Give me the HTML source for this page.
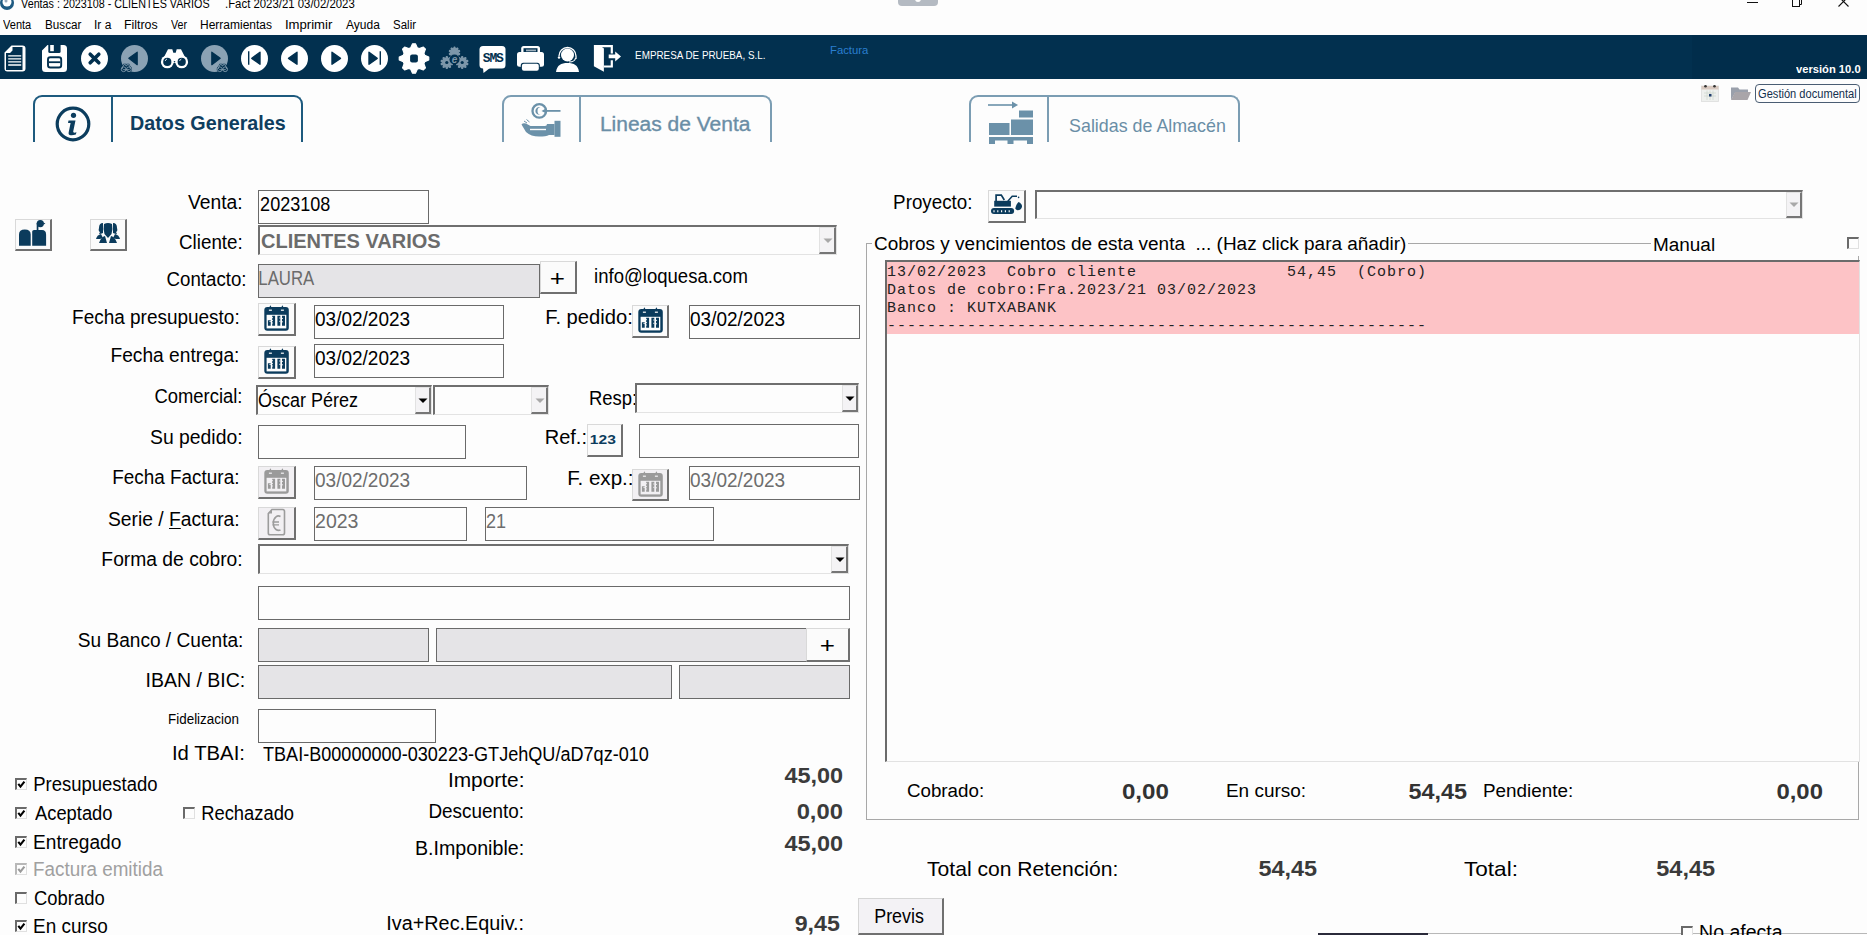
<!DOCTYPE html>
<html><head><meta charset='utf-8'><style>
html,body{margin:0;padding:0;}
body{width:1867px;height:935px;overflow:hidden;position:relative;background:#fdfdfd;font-family:'Liberation Sans',sans-serif;}
.t{position:absolute;white-space:pre;line-height:normal;}
svg{overflow:visible}
</style></head><body>
<svg style="position:absolute;left:0px;top:-4px" width="16" height="16" viewBox="0 0 16 16"><circle cx="7" cy="7" r="7" fill="#1f5b82"/><circle cx="7" cy="6" r="4.5" fill="#fff"/><circle cx="6" cy="5" r="1.5" fill="#9ab"/></svg>
<div class="t" style="transform:translateX(-0.90px) scaleX(0.8952);left:22px;top:-3px;font-family:'Liberation Sans';font-size:12px;font-weight:normal;color:#000;transform-origin:left center;">Ventas : 2023108 - CLIENTES VARIOS</div>
<div class="t" style="transform:translateX(0.00px) scaleX(0.9485);left:225px;top:-3px;font-family:'Liberation Sans';font-size:12px;font-weight:normal;color:#000;transform-origin:left center;">.Fact 2023/21 03/02/2023</div>
<div style="position:absolute;left:898px;top:-6px;width:40px;height:12px;background:#b4bac2;border-radius:0 0 4px 4px"></div>
<div style="position:absolute;left:915px;top:-4px;width:6px;height:6px;background:#fff;border-radius:50%"></div>
<div style="position:absolute;left:1747px;top:2px;width:11px;height:1px;box-sizing:border-box;background:#111"></div>
<svg style="position:absolute;left:1792px;top:-2px" width="12" height="10" viewBox="0 0 12 10"><rect x="0.5" y="1.5" width="7" height="7" fill="none" stroke="#111"/><path d="M2.5 1.5V-0.5H9.5V6.5H7.5" fill="none" stroke="#111"/></svg>
<svg style="position:absolute;left:1838px;top:-4px" width="11" height="11" viewBox="0 0 11 11"><path d="M0.5 0.5L10.5 10.5M10.5 0.5L0.5 10.5" stroke="#111" stroke-width="1.1"/></svg>
<div class="t" style="transform:translateX(0.00px) scaleX(0.9194);left:3px;top:18px;font-family:'Liberation Sans';font-size:12px;font-weight:normal;color:#000;transform-origin:left center;">Venta</div>
<div class="t" style="transform:translateX(-0.97px) scaleX(0.9722);left:46px;top:18px;font-family:'Liberation Sans';font-size:12px;font-weight:normal;color:#000;transform-origin:left center;">Buscar</div>
<div class="t" style="transform:translateX(-1.00px) scaleX(1.0000);left:95px;top:18px;font-family:'Liberation Sans';font-size:12px;font-weight:normal;color:#000;transform-origin:left center;">Ir a</div>
<div class="t" style="transform:translateX(-1.03px) scaleX(1.0323);left:125px;top:18px;font-family:'Liberation Sans';font-size:12px;font-weight:normal;color:#000;transform-origin:left center;">Filtros</div>
<div class="t" style="transform:translateX(0.00px) scaleX(0.8889);left:171px;top:18px;font-family:'Liberation Sans';font-size:12px;font-weight:normal;color:#000;transform-origin:left center;">Ver</div>
<div class="t" style="transform:translateX(-1.00px) scaleX(1.0000);left:201px;top:18px;font-family:'Liberation Sans';font-size:12px;font-weight:normal;color:#000;transform-origin:left center;">Herramientas</div>
<div class="t" style="transform:translateX(-1.10px) scaleX(1.0952);left:286px;top:18px;font-family:'Liberation Sans';font-size:12px;font-weight:normal;color:#000;transform-origin:left center;">Imprimir</div>
<div class="t" style="transform:translateX(0.00px) scaleX(1.0000);left:346px;top:18px;font-family:'Liberation Sans';font-size:12px;font-weight:normal;color:#000;transform-origin:left center;">Ayuda</div>
<div class="t" style="transform:translateX(-0.96px) scaleX(0.9565);left:394px;top:18px;font-family:'Liberation Sans';font-size:12px;font-weight:normal;color:#000;transform-origin:left center;">Salir</div>
<div style="position:absolute;left:0px;top:35px;width:1867px;height:44px;box-sizing:border-box;background:#02304f"></div>
<div style="position:absolute;left:1692px;top:35px;width:175px;height:44px;box-sizing:border-box;background:#012d4b"></div>
<svg style="position:absolute;left:4px;top:45px" width="22" height="27" viewBox="0 0 22 27"><path d="M7.5 0.5H18.5a3 3 0 0 1 3 3V23.5a3 3 0 0 1-3 3H3.5a3 3 0 0 1-3-3V7.5Z" fill="#ffffff"/><path d="M2 8H6L8.5 5.5V2H18.5V25H2Z" fill="#02304f"/><path d="M4.2 10.8H17.2M4.2 13.8H17.2M4.2 16.9H17.2M4.2 20H17.2" stroke="#ffffff" stroke-width="1.3"/></svg>
<svg style="position:absolute;left:42px;top:45px" width="25" height="27" viewBox="0 0 25 27"><path d="M5.5 0H21.5a3.5 3.5 0 0 1 3.5 3.5V23.5a3.5 3.5 0 0 1-3.5 3.5H3.5a3.5 3.5 0 0 1-3.5-3.5V5.5Z" fill="#ffffff"/><path d="M6.3 0H18.6V6.5a1.5 1.5 0 0 1-1.5 1.5H7.8a1.5 1.5 0 0 1-1.5-1.5Z" fill="#02304f"/><rect x="8.2" y="0" width="3.6" height="6.2" fill="#ffffff"/><rect x="6" y="12.3" width="13.2" height="10.2" rx="2.3" fill="none" stroke="#02304f" stroke-width="1.9"/><path d="M7 17.2H18.2" stroke="#02304f" stroke-width="1.8"/></svg>
<svg style="position:absolute;left:81px;top:45px" width="27" height="27" viewBox="0 0 27 27"><circle cx="13.5" cy="13.5" r="13.5" fill="#ffffff"/><path d="M9.2 9.2L17.8 17.8M17.8 9.2L9.2 17.8" stroke="#02304f" stroke-width="3.6" stroke-linecap="round"/></svg>
<svg style="position:absolute;left:121px;top:45px" width="27" height="28" viewBox="0 0 27 28"><circle cx="13.5" cy="13.5" r="13.5" fill="#8ba2b4"/><path d="M7.8 13.3L16.2 7.2V19.7Z" fill="#02304f" stroke="#02304f" stroke-width="1.2" stroke-linejoin="round"/><g transform="translate(0.3,19.5) scale(0.37)" fill="#02304f" stroke="#02304f" stroke-width="4"><path d="M2 10L7 0.3H11.3L12.3 3.8H14.7L15.7 0.3H20L25 10L21 14H6Z"/><circle cx="6.3" cy="12.9" r="6.4"/><circle cx="20.7" cy="12.9" r="6.4"/></g><g transform="translate(0.3,19.5) scale(0.37)" fill="none" stroke="#8ba2b4" stroke-width="2.2"><path d="M2 10L7 0.3H11.3L12.3 3.8H14.7L15.7 0.3H20L25 10L21 14H6Z"/><circle cx="6.3" cy="12.9" r="6.4"/><circle cx="20.7" cy="12.9" r="6.4"/></g></svg>
<svg style="position:absolute;left:161px;top:49px" width="27" height="20" viewBox="0 0 27 20"><g transform="translate(0,0) scale(1.0)" fill="#ffffff"><path d="M2 10L7 0.3H11.3L12.3 3.8H14.7L15.7 0.3H20L25 10L21 14H6Z"/><circle cx="6.3" cy="12.9" r="6.4"/><circle cx="20.7" cy="12.9" r="6.4"/></g><circle cx="6.3" cy="12.9" r="4.1" fill="#02304f"/><circle cx="20.7" cy="12.9" r="4.1" fill="#02304f"/><circle cx="13.5" cy="12.8" r="0.8" fill="#02304f"/><path d="M4.2 12.0Q4.5 10.5 6.0 10.0M18.6 12.0Q18.9 10.5 20.4 10.0" stroke="#ffffff" stroke-width="0.8" fill="none"/></svg>
<svg style="position:absolute;left:201px;top:45px" width="27" height="28" viewBox="0 0 27 28"><circle cx="13.5" cy="13.5" r="13.5" fill="#8ba2b4"/><path d="M19.2 13.3L10.8 7.2V19.7Z" fill="#02304f" stroke="#02304f" stroke-width="1.2" stroke-linejoin="round"/><g transform="translate(16.5,19.5) scale(0.37)" fill="#02304f" stroke="#02304f" stroke-width="4"><path d="M2 10L7 0.3H11.3L12.3 3.8H14.7L15.7 0.3H20L25 10L21 14H6Z"/><circle cx="6.3" cy="12.9" r="6.4"/><circle cx="20.7" cy="12.9" r="6.4"/></g><g transform="translate(16.5,19.5) scale(0.37)" fill="none" stroke="#8ba2b4" stroke-width="2.2"><path d="M2 10L7 0.3H11.3L12.3 3.8H14.7L15.7 0.3H20L25 10L21 14H6Z"/><circle cx="6.3" cy="12.9" r="6.4"/><circle cx="20.7" cy="12.9" r="6.4"/></g></svg>
<svg style="position:absolute;left:241px;top:45px" width="27" height="27" viewBox="0 0 27 27"><circle cx="13.5" cy="13.5" r="13.5" fill="#ffffff"/><path d="M7.7 6.2V19.7" stroke="#02304f" stroke-width="1.4"/><path d="M10.8 13.4L19 7.2V19.2Z" fill="#02304f" stroke="#02304f" stroke-linejoin="round" stroke-width="1.4"/></svg>
<svg style="position:absolute;left:281px;top:45px" width="27" height="27" viewBox="0 0 27 27"><circle cx="13.5" cy="13.5" r="13.5" fill="#ffffff"/><path d="M7.5 13.4L16 7.2V19.2Z" fill="#02304f" stroke="#02304f" stroke-linejoin="round" stroke-width="1.4"/></svg>
<svg style="position:absolute;left:321px;top:45px" width="27" height="27" viewBox="0 0 27 27"><circle cx="13.5" cy="13.5" r="13.5" fill="#ffffff"/><path d="M19.5 13.4L11 7.2V19.2Z" fill="#02304f" stroke="#02304f" stroke-linejoin="round" stroke-width="1.4"/></svg>
<svg style="position:absolute;left:361px;top:45px" width="27" height="27" viewBox="0 0 27 27"><circle cx="13.5" cy="13.5" r="13.5" fill="#ffffff"/><path d="M19.3 6.2V19.7" stroke="#02304f" stroke-width="1.4"/><path d="M16.2 13.4L8 7.2V19.2Z" fill="#02304f" stroke="#02304f" stroke-linejoin="round" stroke-width="1.4"/></svg>
<svg style="position:absolute;left:398px;top:43px" width="32" height="31" viewBox="0 0 32 31"><polygon points="14.55,0.77 17.45,0.77 19.25,4.78 21.28,5.62 25.39,4.06 27.44,6.11 25.88,10.22 26.72,12.25 30.73,14.05 30.73,16.95 26.72,18.75 25.88,20.78 27.44,24.89 25.39,26.94 21.28,25.38 19.25,26.22 17.45,30.23 14.55,30.23 12.75,26.22 10.72,25.38 6.61,26.94 4.56,24.89 6.12,20.78 5.28,18.75 1.27,16.95 1.27,14.05 5.28,12.25 6.12,10.22 4.56,6.11 6.61,4.06 10.72,5.62 12.75,4.78" fill="#ffffff" stroke="#ffffff" stroke-width="1.2" stroke-linejoin="round"/><rect x="12.1" y="11.6" width="7.8" height="7.8" rx="2" fill="#02304f"/></svg>
<svg style="position:absolute;left:441px;top:47px" width="27" height="24" viewBox="0 0 27 24"><polygon points="13.08,0.22 13.92,0.22 14.39,1.80 14.95,1.99 16.27,0.98 16.94,1.47 16.39,3.03 16.74,3.51 18.40,3.47 18.65,4.26 17.29,5.20 17.29,5.80 18.65,6.74 18.40,7.53 16.74,7.49 16.39,7.97 16.94,9.53 16.27,10.02 14.95,9.01 14.39,9.20 13.92,10.78 13.08,10.78 12.61,9.20 12.05,9.01 10.73,10.02 10.06,9.53 10.61,7.97 10.26,7.49 8.60,7.53 8.35,6.74 9.71,5.80 9.71,5.20 8.35,4.26 8.60,3.47 10.26,3.51 10.61,3.03 10.06,1.47 10.73,0.98 12.05,1.99 12.61,1.80" fill="#7d97aa" stroke="#7d97aa" stroke-width="1.2" stroke-linejoin="round"/><polygon points="5.34,9.72 6.26,9.72 6.78,11.42 7.41,11.62 8.83,10.55 9.57,11.09 8.99,12.77 9.38,13.31 11.16,13.28 11.44,14.15 9.99,15.17 9.99,15.83 11.44,16.85 11.16,17.72 9.38,17.69 8.99,18.23 9.57,19.91 8.83,20.45 7.41,19.38 6.78,19.58 6.26,21.28 5.34,21.28 4.82,19.58 4.19,19.38 2.77,20.45 2.03,19.91 2.61,18.23 2.22,17.69 0.44,17.72 0.16,16.85 1.61,15.83 1.61,15.17 0.16,14.15 0.44,13.28 2.22,13.31 2.61,12.77 2.03,11.09 2.77,10.55 4.19,11.62 4.82,11.42" fill="#7d97aa" stroke="#7d97aa" stroke-width="1.2" stroke-linejoin="round"/><polygon points="20.74,9.72 21.66,9.72 22.18,11.42 22.81,11.62 24.23,10.55 24.97,11.09 24.39,12.77 24.78,13.31 26.56,13.28 26.84,14.15 25.39,15.17 25.39,15.83 26.84,16.85 26.56,17.72 24.78,17.69 24.39,18.23 24.97,19.91 24.23,20.45 22.81,19.38 22.18,19.58 21.66,21.28 20.74,21.28 20.22,19.58 19.59,19.38 18.17,20.45 17.43,19.91 18.01,18.23 17.62,17.69 15.84,17.72 15.56,16.85 17.01,15.83 17.01,15.17 15.56,14.15 15.84,13.28 17.62,13.31 18.01,12.77 17.43,11.09 18.17,10.55 19.59,11.62 20.22,11.42" fill="#7d97aa" stroke="#7d97aa" stroke-width="1.2" stroke-linejoin="round"/><circle cx="5.8" cy="15.5" r="1.6" fill="#02304f"/><circle cx="21.2" cy="15.5" r="1.6" fill="#02304f"/><circle cx="13.5" cy="12.5" r="5" fill="#02304f"/><text x="13.5" y="16" text-anchor="middle" font-family="Liberation Sans" font-weight="bold" font-style="italic" font-size="10" fill="#7d97aa">e</text></svg>
<svg style="position:absolute;left:479px;top:46px" width="27" height="27" viewBox="0 0 27 27"><rect x="0.5" y="0" width="26" height="22.5" rx="3.5" fill="#ffffff"/><path d="M4 22H11L4.5 27Z" fill="#ffffff"/><text x="13.7" y="16" text-anchor="middle" font-family="Liberation Mono" font-weight="bold" font-size="13" fill="#02304f" letter-spacing="-1.2" style="-webkit-font-smoothing:antialiased">SMS</text></svg>
<svg style="position:absolute;left:517px;top:46px" width="27" height="25" viewBox="0 0 27 25"><path d="M4.2 7V2.5a2.5 2.5 0 0 1 2.5-2.5H20.5a2.5 2.5 0 0 1 2.5 2.5V7" fill="#ffffff"/><rect x="6.5" y="2.2" width="14" height="5.5" fill="#02304f"/><path d="M9 4.2H19M9 6.3H19" stroke="#ffffff" stroke-width="0.9"/><rect x="0" y="6" width="27" height="14.8" rx="2.5" fill="#ffffff"/><rect x="3.8" y="16.8" width="19" height="8.8" rx="2.5" fill="#02304f"/><rect x="4.9" y="17.8" width="16.9" height="7" rx="2" fill="#ffffff"/></svg>
<svg style="position:absolute;left:556px;top:46px" width="23" height="27" viewBox="0 0 23 27"><path d="M0 26C1 19 5 17 11.5 17S22 19 23 26Z" fill="#ffffff"/><circle cx="11.5" cy="9" r="6.5" fill="#ffffff"/><path d="M3 10A8.5 8.5 0 0 1 20 10V13" fill="none" stroke="#ffffff" stroke-width="1.3"/><path d="M19.5 12Q19 16 13 16" fill="none" stroke="#ffffff" stroke-width="1.1"/><circle cx="3" cy="11.5" r="1.2" fill="#ffffff"/></svg>
<svg style="position:absolute;left:593px;top:45px" width="28" height="27" viewBox="0 0 28 27"><path d="M0.9 0.1H19.9V8.4H17.7V2.3H6.3Z" fill="#ffffff"/><path d="M17.7 15.2H19.9V22.6H10.9V20.6H17.7Z" fill="#ffffff"/><path d="M0.9 0.1H6.3L10.9 3.6V26.8L0.9 21.3Z" fill="#ffffff"/><path d="M15.7 9.6H22.2V6.4L28 11.6L22.2 16.6V13.3H15.7Z" fill="#ffffff"/></svg>
<div class="t" style="transform:translateX(-0.90px) scaleX(0.8958);left:636px;top:49px;font-family:'Liberation Sans';font-size:11px;font-weight:normal;color:#fff;transform-origin:left center;">EMPRESA DE PRUEBA, S.L.</div>
<div class="t" style="transform:translateX(-1.03px) scaleX(1.0278);left:831px;top:44px;font-family:'Liberation Sans';font-size:11px;font-weight:normal;color:#2a7fd0;transform-origin:left center;">Factura</div>
<div class="t" style="transform:translateX(0.00px) scaleX(1.0159);left:1796px;top:63px;font-family:'Liberation Sans';font-size:11px;font-weight:bold;color:#fff;transform-origin:left center;">versión 10.0</div>
<svg style="position:absolute;left:1701px;top:84px" width="18" height="18" viewBox="0 0 18 18"><rect x="0.5" y="2" width="17" height="15.5" fill="#eef0ee" stroke="#dcdcdc" stroke-width="0.8"/><rect x="0.5" y="2" width="17" height="3.5" fill="#d9c9c0"/><circle cx="4.5" cy="2.2" r="1.3" fill="#333"/><circle cx="13.5" cy="2.2" r="1.3" fill="#333"/><path d="M3 9H15M3 12H15M6 6.5V16M9 6.5V16M12 6.5V16" stroke="#cfd8cf" stroke-width="0.8"/><rect x="8" y="10" width="2.5" height="2.5" fill="#1e3c6c"/></svg>
<svg style="position:absolute;left:1731px;top:86px" width="20" height="15" viewBox="0 0 20 15"><path d="M0 1.5H7L8.5 3.5H17V6H4.5L0 14Z" fill="#9aa0ab"/><path d="M0 14L4 6H20L16.5 14Z" fill="#a9a5a9"/></svg>
<div style="position:absolute;left:1755px;top:84px;width:105px;height:19px;box-sizing:border-box;border:1.5px solid #4a5d73;border-radius:4px;background:#fdfdfd"></div>
<div class="t" style="transform:translateX(-0.92px) scaleX(0.9238);left:1759px;top:87px;font-family:'Liberation Sans';font-size:12px;font-weight:normal;color:#13304d;transform-origin:left center;">Gestión documental</div>
<div style="position:absolute;left:33px;top:95px;width:270px;height:52px;box-sizing:border-box;border:2px solid #1d5a7e;border-bottom:none;border-radius:9px 9px 0 0"></div>
<div style="position:absolute;left:33px;top:142px;width:271px;height:10px;box-sizing:border-box;background:#fdfdfd"></div>
<div style="position:absolute;left:111px;top:96px;width:2px;height:46px;box-sizing:border-box;background:#1d5a7e"></div>
<div style="position:absolute;left:502px;top:95px;width:270px;height:52px;box-sizing:border-box;border:2px solid #7b9db3;border-bottom:none;border-radius:9px 9px 0 0"></div>
<div style="position:absolute;left:502px;top:142px;width:271px;height:10px;box-sizing:border-box;background:#fdfdfd"></div>
<div style="position:absolute;left:579px;top:96px;width:2px;height:46px;box-sizing:border-box;background:#7b9db3"></div>
<div style="position:absolute;left:969px;top:95px;width:271px;height:52px;box-sizing:border-box;border:2px solid #7b9db3;border-bottom:none;border-radius:9px 9px 0 0"></div>
<div style="position:absolute;left:969px;top:142px;width:272px;height:10px;box-sizing:border-box;background:#fdfdfd"></div>
<div style="position:absolute;left:1047px;top:96px;width:2px;height:46px;box-sizing:border-box;background:#7b9db3"></div>
<svg style="position:absolute;left:55px;top:106px" width="36" height="36" viewBox="0 0 36 36"><circle cx="18" cy="18" r="15.8" fill="none" stroke="#0c3d5e" stroke-width="3.2"/><circle cx="18.5" cy="9.3" r="2.6" fill="#0c3d5e"/><path d="M13.5 14.5H20.5L18.2 25.5Q18 27 20.5 26.5L21.5 26.2L20.8 28.5Q18 29.5 15.8 29.3Q12.8 29 13.8 25.8L15.6 17H13Z" fill="#0c3d5e"/></svg>
<div class="t" style="transform:translateX(-0.94px) scaleX(0.9390);left:131px;top:111px;font-family:'Liberation Sans';font-size:21px;font-weight:bold;color:#0f3e5f;transform-origin:left center;">Datos Generales</div>
<svg style="position:absolute;left:521px;top:102px" width="41" height="36" viewBox="0 0 41 36"><circle cx="18.3" cy="8.9" r="6.8" fill="none" stroke="#6b91a9" stroke-width="2.3"/><path d="M19.5 5.2A3.9 3.9 0 1 0 19.5 12.6A3 3.7 0 1 1 19.5 5.2Z" fill="#6b91a9"/><path d="M22 8.9H39.5" stroke="#6b91a9" stroke-width="1.8"/><path d="M20.5 8.9L24 7V10.8Z" fill="#6b91a9"/><rect x="33.5" y="18.8" width="6" height="16" fill="#6b91a9"/><path d="M0.5 22.5Q2 20.5 5 21.5L9.5 24H24Q26 24 26 22H33.5V33H28Q25 34.5 18 34.5Q10 34.5 5 30Z" fill="#6b91a9"/><path d="M9 27.5H25" stroke="#fcfcfc" stroke-width="1.4"/><path d="M3 19L6 21M5.5 17.5L8.5 20" stroke="#6b91a9" stroke-width="1"/></svg>
<div class="t" style="transform:translateX(-2.10px) scaleX(1.0493);left:602px;top:113px;font-family:'Liberation Sans';font-size:20px;font-weight:normal;color:#6a8ea6;transform-origin:left center;-webkit-text-stroke:0.35px #6a8ea6;">Lineas de Venta</div>
<svg style="position:absolute;left:988px;top:100px" width="46" height="44" viewBox="0 0 46 44"><path d="M0 5H26" stroke="#6b91a9" stroke-width="1.6"/><path d="M24 1.5L30 5L24 8.5Z" fill="#6b91a9"/><rect x="29.5" y="9.5" width="0" height="0"/><rect x="31" y="10.5" width="14" height="7" fill="#6b91a9"/><rect x="23" y="19.5" width="22" height="15.5" fill="#6b91a9"/><rect x="1" y="23" width="20.5" height="12" fill="#6b91a9"/><rect x="1" y="37" width="44" height="3.5" fill="#6b91a9"/><rect x="1" y="40" width="6" height="4" fill="#6b91a9"/><rect x="19.5" y="40" width="6" height="4" fill="#6b91a9"/><rect x="39" y="40" width="6" height="4" fill="#6b91a9"/></svg>
<div class="t" style="transform:translateX(-0.94px) scaleX(0.9394);left:1070px;top:115px;font-family:'Liberation Sans';font-size:19px;font-weight:normal;color:#6a8ea6;transform-origin:left center;">Salidas de Almacén</div>
<div style="position:absolute;left:15px;top:219px;width:37px;height:32px;box-sizing:border-box;background:#fbfbfb;border-top:1px solid #d9d9d9;border-left:1px solid #d9d9d9;border-right:2px solid #707070;border-bottom:2px solid #707070"></div>
<svg style="position:absolute;left:15px;top:219px" width="37" height="32" viewBox="0 0 37 32"><path d="M4 26.7V15.6Q4 10.6 9.8 10.6Q15.7 10.6 15.7 15.6V26.7Z" fill="#0b3b5c"/><path d="M17.2 26.7V12.5Q17.2 11 19 11H27Q31.1 11 31.1 15.6V26.7Z" fill="#0b3b5c"/><rect x="21.7" y="4" width="1.7" height="7.5" fill="#0b3b5c"/><circle cx="25.3" cy="4.6" r="3.6" fill="#0b3b5c"/><path d="M28.3 3.6L30.4 4.6L28.3 5.8Z" fill="#0b3b5c"/></svg>
<div style="position:absolute;left:90px;top:219px;width:37px;height:32px;box-sizing:border-box;background:#fbfbfb;border-top:1px solid #d9d9d9;border-left:1px solid #d9d9d9;border-right:2px solid #707070;border-bottom:2px solid #707070"></div>
<svg style="position:absolute;left:96px;top:222px" width="24" height="24" viewBox="0 0 24 24"><path d="M7 1Q3 1 3 6Q2 9 4 10L3 12Q5 12 7 11Z" fill="#0b3b5c"/><path d="M17 1Q21 1 21 6Q22 9 20 10L21 12Q19 12 17 11Z" fill="#0b3b5c"/><path d="M8 2Q12 0 16 2Q17 6 15.5 12L12 16L8.5 12Q7 6 8 2Z" fill="#0b3b5c"/><path d="M0 17Q1 13 5 12L7 16L4 17Z" fill="#0b3b5c"/><path d="M24 17Q23 13 19 12L17 16L20 17Z" fill="#0b3b5c"/><path d="M3 21Q5 15 9 14L11 21Z" fill="#0b3b5c"/><path d="M21 21Q19 15 15 14L13 21Z" fill="#0b3b5c"/></svg>
<div class="t" style="transform:translateX(1.93px) scaleX(0.9636);right:1626px;top:191px;font-family:'Liberation Sans';font-size:20px;font-weight:normal;color:#000;transform-origin:right center;">Venta:</div>
<div class="t" style="transform:translateX(1.88px) scaleX(0.9385);right:1626px;top:231px;font-family:'Liberation Sans';font-size:20px;font-weight:normal;color:#000;transform-origin:right center;">Cliente:</div>
<div class="t" style="transform:translateX(1.87px) scaleX(0.9337);right:1622px;top:268px;font-family:'Liberation Sans';font-size:20px;font-weight:normal;color:#000;transform-origin:right center;">Contacto:</div>
<div class="t" style="transform:translateX(1.90px) scaleX(0.9480);right:1629px;top:306px;font-family:'Liberation Sans';font-size:20px;font-weight:normal;color:#000;transform-origin:right center;">Fecha presupuesto:</div>
<div class="t" style="transform:translateX(1.92px) scaleX(0.9588);right:1629px;top:344px;font-family:'Liberation Sans';font-size:20px;font-weight:normal;color:#000;transform-origin:right center;">Fecha entrega:</div>
<div class="t" style="transform:translateX(1.84px) scaleX(0.9204);right:1626px;top:385px;font-family:'Liberation Sans';font-size:20px;font-weight:normal;color:#000;transform-origin:right center;">Comercial:</div>
<div class="t" style="transform:translateX(1.94px) scaleX(0.9677);right:1626px;top:426px;font-family:'Liberation Sans';font-size:20px;font-weight:normal;color:#000;transform-origin:right center;">Su pedido:</div>
<div class="t" style="transform:translateX(1.89px) scaleX(0.9450);right:1629px;top:466px;font-family:'Liberation Sans';font-size:20px;font-weight:normal;color:#000;transform-origin:right center;">Fecha Factura:</div>
<div class="t" style="transform:translateX(1.93px) scaleX(0.9627);right:1629px;top:508px;font-family:'Liberation Sans';font-size:20px;font-weight:normal;color:#000;transform-origin:right center;">Serie / <u style="text-decoration-thickness:1px;text-underline-offset:2px">F</u>actura:</div>
<div class="t" style="transform:translateX(1.93px) scaleX(0.9629);right:1626px;top:548px;font-family:'Liberation Sans';font-size:20px;font-weight:normal;color:#000;transform-origin:right center;">Forma de cobro:</div>
<div class="t" style="transform:translateX(1.91px) scaleX(0.9547);right:1626px;top:629px;font-family:'Liberation Sans';font-size:20px;font-weight:normal;color:#000;transform-origin:right center;">Su Banco / Cuenta:</div>
<div class="t" style="transform:translateX(1.95px) scaleX(0.9755);right:1624px;top:669px;font-family:'Liberation Sans';font-size:20px;font-weight:normal;color:#000;transform-origin:right center;">IBAN / BIC:</div>
<div class="t" style="transform:translateX(2.03px) scaleX(1.0147);right:1624px;top:742px;font-family:'Liberation Sans';font-size:20px;font-weight:normal;color:#000;transform-origin:right center;">Id TBAI:</div>
<div class="t" style="transform:translateX(0.96px) scaleX(0.9583);right:1629px;top:711px;font-family:'Liberation Sans';font-size:14px;font-weight:normal;color:#000;transform-origin:right center;">Fidelizacion</div>
<div style="position:absolute;left:258px;top:190px;width:171px;height:34px;box-sizing:border-box;background:#fdfdfd;border:1px solid #6a6a6a"></div>
<div class="t" style="transform:translateX(-0.90px) scaleX(0.9013);left:261px;top:193px;font-family:'Liberation Sans';font-size:20px;font-weight:normal;color:#000;transform-origin:left center;">2023108</div>
<div style="position:absolute;left:258px;top:225px;width:579px;height:30px;box-sizing:border-box;background:#fdfdfd;border-top:2px solid #6f6f6f;border-left:2px solid #6f6f6f;border-right:1px solid #e3e3e3;border-bottom:1px solid #e3e3e3"></div>
<div style="position:absolute;left:819px;top:227px;width:17px;height:27px;box-sizing:border-box;background:#f4f3f5;border-top:1px solid #e2e2e2;border-left:1px solid #e2e2e2;border-right:2px solid #767676;border-bottom:2px solid #767676"></div>
<svg style="position:absolute;left:822.5px;top:237.5px" width="10" height="6" viewBox="0 0 10 6"><path d="M0.5 0.5H9.5L5 5Z" fill="#a8a8a8"/></svg>
<div class="t" style="transform:translateX(-1.00px) scaleX(1.0000);left:262px;top:230px;font-family:'Liberation Sans';font-size:20px;font-weight:bold;color:#6b6b6b;transform-origin:left center;">CLIENTES VARIOS</div>
<div style="position:absolute;left:258px;top:264px;width:282px;height:34px;box-sizing:border-box;background:#e5e4e7;border:1px solid #6a6a6a"></div>
<div class="t" style="transform:translateX(-1.68px) scaleX(0.8385);left:260px;top:267px;font-family:'Liberation Sans';font-size:20px;font-weight:normal;color:#6b6b6b;transform-origin:left center;">LAURA</div>
<div style="position:absolute;left:540px;top:261px;width:37px;height:33px;box-sizing:border-box;background:#fbfbfb;border-top:1px solid #d9d9d9;border-left:1px solid #d9d9d9;border-right:2px solid #707070;border-bottom:2px solid #707070"></div>
<div class="t" style="transform:translateX(-1.18px) scaleX(1.1818);left:551px;top:266px;font-family:'Liberation Sans';font-size:22px;font-weight:normal;color:#000;transform-origin:left center;">+</div>
<div class="t" style="transform:translateX(-0.93px) scaleX(0.9268);left:595px;top:265px;font-family:'Liberation Sans';font-size:20px;font-weight:normal;color:#000;transform-origin:left center;">info@loquesa.com</div>
<div style="position:absolute;left:258px;top:303px;width:38px;height:33px;box-sizing:border-box;background:#fbfbfb;border-top:1px solid #d9d9d9;border-left:1px solid #d9d9d9;border-right:2px solid #707070;border-bottom:2px solid #707070"></div>
<svg style="position:absolute;left:264px;top:305px" width="25" height="26" viewBox="0 0 25 26"><rect x="0.3" y="2" width="24.5" height="23.8" rx="3" fill="#0b3b5c"/><rect x="2.6" y="9.8" width="19.7" height="13.6" fill="#fdfdfd"/><path d="M5.2 2.5L6.4 0.2L7.6 2.5ZM17.2 2.5L18.4 0.2L19.6 2.5Z" fill="#0b3b5c"/><rect x="4.9" y="4.6" width="3" height="1.2" fill="#fdfdfd"/><rect x="16.9" y="4.6" width="3" height="1.2" fill="#fdfdfd"/><path d="M3.9 15.3H6.7V20.8H3.9ZM8.2 10.8H11.1V20.8H8.2ZM13.4 10.8H16.3V20.8H13.4ZM18 10.8H21V20.8H18Z" fill="#0b3b5c"/><path d="M5.5 16.5H6.8M8.1 12.6H9M8.1 15.5H9M8.1 18H9M15.2 13H16.4M15.2 16.3H16.4M18 13.4H19M18 16.8H19" stroke="#fdfdfd" stroke-width="0.9"/></svg>
<div style="position:absolute;left:314px;top:305px;width:190px;height:34px;box-sizing:border-box;background:#fdfdfd;border:1px solid #6a6a6a"></div>
<div class="t" style="transform:translateX(-0.95px) scaleX(0.9490);left:316px;top:308px;font-family:'Liberation Sans';font-size:20px;font-weight:normal;color:#000;transform-origin:left center;">03/02/2023</div>
<div style="position:absolute;left:258px;top:346px;width:38px;height:33px;box-sizing:border-box;background:#fbfbfb;border-top:1px solid #d9d9d9;border-left:1px solid #d9d9d9;border-right:2px solid #707070;border-bottom:2px solid #707070"></div>
<svg style="position:absolute;left:264px;top:348px" width="25" height="26" viewBox="0 0 25 26"><rect x="0.3" y="2" width="24.5" height="23.8" rx="3" fill="#0b3b5c"/><rect x="2.6" y="9.8" width="19.7" height="13.6" fill="#fdfdfd"/><path d="M5.2 2.5L6.4 0.2L7.6 2.5ZM17.2 2.5L18.4 0.2L19.6 2.5Z" fill="#0b3b5c"/><rect x="4.9" y="4.6" width="3" height="1.2" fill="#fdfdfd"/><rect x="16.9" y="4.6" width="3" height="1.2" fill="#fdfdfd"/><path d="M3.9 15.3H6.7V20.8H3.9ZM8.2 10.8H11.1V20.8H8.2ZM13.4 10.8H16.3V20.8H13.4ZM18 10.8H21V20.8H18Z" fill="#0b3b5c"/><path d="M5.5 16.5H6.8M8.1 12.6H9M8.1 15.5H9M8.1 18H9M15.2 13H16.4M15.2 16.3H16.4M18 13.4H19M18 16.8H19" stroke="#fdfdfd" stroke-width="0.9"/></svg>
<div style="position:absolute;left:314px;top:344px;width:190px;height:34px;box-sizing:border-box;background:#fdfdfd;border:1px solid #6a6a6a"></div>
<div class="t" style="transform:translateX(-0.95px) scaleX(0.9490);left:316px;top:347px;font-family:'Liberation Sans';font-size:20px;font-weight:normal;color:#000;transform-origin:left center;">03/02/2023</div>
<div class="t" style="transform:translateX(2.02px) scaleX(1.0084);right:1236px;top:306px;font-family:'Liberation Sans';font-size:20px;font-weight:normal;color:#000;transform-origin:right center;">F. pedido:</div>
<div style="position:absolute;left:632px;top:305px;width:37px;height:33px;box-sizing:border-box;background:#fbfbfb;border-top:1px solid #d9d9d9;border-left:1px solid #d9d9d9;border-right:2px solid #707070;border-bottom:2px solid #707070"></div>
<svg style="position:absolute;left:638px;top:307px" width="25" height="26" viewBox="0 0 25 26"><rect x="0.3" y="2" width="24.5" height="23.8" rx="3" fill="#0b3b5c"/><rect x="2.6" y="9.8" width="19.7" height="13.6" fill="#fdfdfd"/><path d="M5.2 2.5L6.4 0.2L7.6 2.5ZM17.2 2.5L18.4 0.2L19.6 2.5Z" fill="#0b3b5c"/><rect x="4.9" y="4.6" width="3" height="1.2" fill="#fdfdfd"/><rect x="16.9" y="4.6" width="3" height="1.2" fill="#fdfdfd"/><path d="M3.9 15.3H6.7V20.8H3.9ZM8.2 10.8H11.1V20.8H8.2ZM13.4 10.8H16.3V20.8H13.4ZM18 10.8H21V20.8H18Z" fill="#0b3b5c"/><path d="M5.5 16.5H6.8M8.1 12.6H9M8.1 15.5H9M8.1 18H9M15.2 13H16.4M15.2 16.3H16.4M18 13.4H19M18 16.8H19" stroke="#fdfdfd" stroke-width="0.9"/></svg>
<div style="position:absolute;left:689px;top:305px;width:171px;height:34px;box-sizing:border-box;background:#fdfdfd;border:1px solid #6a6a6a"></div>
<div class="t" style="transform:translateX(-0.95px) scaleX(0.9490);left:691px;top:308px;font-family:'Liberation Sans';font-size:20px;font-weight:normal;color:#000;transform-origin:left center;">03/02/2023</div>
<div style="position:absolute;left:256px;top:385px;width:176px;height:30px;box-sizing:border-box;background:#fdfdfd;border-top:2px solid #6f6f6f;border-left:2px solid #6f6f6f;border-right:1px solid #e3e3e3;border-bottom:1px solid #e3e3e3"></div>
<div style="position:absolute;left:415px;top:387px;width:16px;height:27px;box-sizing:border-box;background:#f4f3f5;border-top:1px solid #e2e2e2;border-left:1px solid #e2e2e2;border-right:2px solid #767676;border-bottom:2px solid #767676"></div>
<svg style="position:absolute;left:418.0px;top:397.5px" width="10" height="6" viewBox="0 0 10 6"><path d="M0.5 0.5H9.5L5 5Z" fill="#000"/></svg>
<div class="t" style="transform:translateX(-0.90px) scaleX(0.8991);left:259px;top:389px;font-family:'Liberation Sans';font-size:20px;font-weight:normal;color:#000;transform-origin:left center;">Óscar Pérez</div>
<div style="position:absolute;left:433px;top:385px;width:116px;height:30px;box-sizing:border-box;background:#fdfdfd;border-top:2px solid #6f6f6f;border-left:2px solid #6f6f6f;border-right:1px solid #e3e3e3;border-bottom:1px solid #e3e3e3"></div>
<div style="position:absolute;left:531px;top:387px;width:17px;height:27px;box-sizing:border-box;background:#f4f3f5;border-top:1px solid #e2e2e2;border-left:1px solid #e2e2e2;border-right:2px solid #767676;border-bottom:2px solid #767676"></div>
<svg style="position:absolute;left:534.5px;top:397.5px" width="10" height="6" viewBox="0 0 10 6"><path d="M0.5 0.5H9.5L5 5Z" fill="#a8a8a8"/></svg>
<div class="t" style="transform:translateX(1.84px) scaleX(0.9224);right:1232px;top:387px;font-family:'Liberation Sans';font-size:20px;font-weight:normal;color:#000;transform-origin:right center;">Resp:</div>
<div style="position:absolute;left:635px;top:383px;width:224px;height:30px;box-sizing:border-box;background:#fdfdfd;border-top:2px solid #6f6f6f;border-left:2px solid #6f6f6f;border-right:1px solid #e3e3e3;border-bottom:1px solid #e3e3e3"></div>
<div style="position:absolute;left:842px;top:385px;width:16px;height:27px;box-sizing:border-box;background:#f4f3f5;border-top:1px solid #e2e2e2;border-left:1px solid #e2e2e2;border-right:2px solid #767676;border-bottom:2px solid #767676"></div>
<svg style="position:absolute;left:845.0px;top:395.5px" width="10" height="6" viewBox="0 0 10 6"><path d="M0.5 0.5H9.5L5 5Z" fill="#000"/></svg>
<div style="position:absolute;left:258px;top:425px;width:208px;height:34px;box-sizing:border-box;background:#fdfdfd;border:1px solid #6a6a6a"></div>
<div class="t" style="transform:translateX(2.00px) scaleX(1.0000);right:1282px;top:426px;font-family:'Liberation Sans';font-size:20px;font-weight:normal;color:#000;transform-origin:right center;">Ref.:</div>
<div style="position:absolute;left:587px;top:424px;width:36px;height:33px;box-sizing:border-box;background:#fbfbfb;border-top:1px solid #d9d9d9;border-left:1px solid #d9d9d9;border-right:2px solid #707070;border-bottom:2px solid #707070"></div>
<div class="t" style="transform:translateX(-1.20px) scaleX(1.2000);left:591px;top:432px;font-family:'Liberation Sans';font-size:13px;font-weight:bold;color:#0b3b5c;transform-origin:left center;">123</div>
<div style="position:absolute;left:639px;top:424px;width:220px;height:34px;box-sizing:border-box;background:#fdfdfd;border:1px solid #6a6a6a"></div>
<div style="position:absolute;left:258px;top:466px;width:38px;height:33px;box-sizing:border-box;background:#f2f0f3;border-top:1px solid #d9d9d9;border-left:1px solid #d9d9d9;border-right:2px solid #707070;border-bottom:2px solid #707070"></div>
<svg style="position:absolute;left:264px;top:468px" width="25" height="26" viewBox="0 0 25 26"><rect x="0.3" y="2" width="24.5" height="23.8" rx="3" fill="#9a9a9a"/><rect x="2.6" y="9.8" width="19.7" height="13.6" fill="#f2f0f3"/><path d="M5.2 2.5L6.4 0.2L7.6 2.5ZM17.2 2.5L18.4 0.2L19.6 2.5Z" fill="#9a9a9a"/><rect x="4.9" y="4.6" width="3" height="1.2" fill="#f2f0f3"/><rect x="16.9" y="4.6" width="3" height="1.2" fill="#f2f0f3"/><path d="M3.9 15.3H6.7V20.8H3.9ZM8.2 10.8H11.1V20.8H8.2ZM13.4 10.8H16.3V20.8H13.4ZM18 10.8H21V20.8H18Z" fill="#9a9a9a"/><path d="M5.5 16.5H6.8M8.1 12.6H9M8.1 15.5H9M8.1 18H9M15.2 13H16.4M15.2 16.3H16.4M18 13.4H19M18 16.8H19" stroke="#f2f0f3" stroke-width="0.9"/></svg>
<div style="position:absolute;left:314px;top:466px;width:213px;height:34px;box-sizing:border-box;background:#fdfdfd;border:1px solid #6a6a6a"></div>
<div class="t" style="transform:translateX(-0.95px) scaleX(0.9490);left:316px;top:469px;font-family:'Liberation Sans';font-size:20px;font-weight:normal;color:#6d6d6d;transform-origin:left center;">03/02/2023</div>
<div class="t" style="transform:translateX(2.06px) scaleX(1.0295);right:1236px;top:467px;font-family:'Liberation Sans';font-size:20px;font-weight:normal;color:#000;transform-origin:right center;">F. exp.:</div>
<div style="position:absolute;left:632px;top:469px;width:37px;height:32px;box-sizing:border-box;background:#f2f0f3;border-top:1px solid #d9d9d9;border-left:1px solid #d9d9d9;border-right:2px solid #707070;border-bottom:2px solid #707070"></div>
<svg style="position:absolute;left:638px;top:471px" width="25" height="26" viewBox="0 0 25 26"><rect x="0.3" y="2" width="24.5" height="23.8" rx="3" fill="#9a9a9a"/><rect x="2.6" y="9.8" width="19.7" height="13.6" fill="#f2f0f3"/><path d="M5.2 2.5L6.4 0.2L7.6 2.5ZM17.2 2.5L18.4 0.2L19.6 2.5Z" fill="#9a9a9a"/><rect x="4.9" y="4.6" width="3" height="1.2" fill="#f2f0f3"/><rect x="16.9" y="4.6" width="3" height="1.2" fill="#f2f0f3"/><path d="M3.9 15.3H6.7V20.8H3.9ZM8.2 10.8H11.1V20.8H8.2ZM13.4 10.8H16.3V20.8H13.4ZM18 10.8H21V20.8H18Z" fill="#9a9a9a"/><path d="M5.5 16.5H6.8M8.1 12.6H9M8.1 15.5H9M8.1 18H9M15.2 13H16.4M15.2 16.3H16.4M18 13.4H19M18 16.8H19" stroke="#f2f0f3" stroke-width="0.9"/></svg>
<div style="position:absolute;left:689px;top:466px;width:171px;height:34px;box-sizing:border-box;background:#fdfdfd;border:1px solid #6a6a6a"></div>
<div class="t" style="transform:translateX(-0.95px) scaleX(0.9490);left:691px;top:469px;font-family:'Liberation Sans';font-size:20px;font-weight:normal;color:#6d6d6d;transform-origin:left center;">03/02/2023</div>
<div style="position:absolute;left:258px;top:507px;width:38px;height:33px;box-sizing:border-box;background:#f2f0f3;border-top:1px solid #d9d9d9;border-left:1px solid #d9d9d9;border-right:2px solid #707070;border-bottom:2px solid #707070"></div>
<svg style="position:absolute;left:266px;top:508px" width="20" height="28" viewBox="0 0 20 28"><path d="M6 1.5H16.5Q18.5 1.5 18.5 3.5V25Q18.5 26.8 16.5 26.8H4Q2.3 26.8 2.3 25V5.5Z" fill="none" stroke="#9c9c9c" stroke-width="1.6"/><path d="M2.3 5.5L6 1.5V5.5Z" fill="#9c9c9c"/><path d="M14.5 8.5Q12 7.2 10 8.8Q7.3 11 7.3 15Q7.3 19.5 10 21.5Q12 23 14.5 22" fill="none" stroke="#9c9c9c" stroke-width="1.6"/><path d="M6.5 14H13M6.5 16.8H13" stroke="#9c9c9c" stroke-width="1.3"/></svg>
<div style="position:absolute;left:314px;top:507px;width:153px;height:34px;box-sizing:border-box;background:#fdfdfd;border:1px solid #6a6a6a"></div>
<div class="t" style="transform:translateX(-0.98px) scaleX(0.9767);left:316px;top:510px;font-family:'Liberation Sans';font-size:20px;font-weight:normal;color:#6d6d6d;transform-origin:left center;">2023</div>
<div style="position:absolute;left:485px;top:507px;width:229px;height:34px;box-sizing:border-box;background:#fdfdfd;border:1px solid #6a6a6a"></div>
<div class="t" style="transform:translateX(-0.90px) scaleX(0.9000);left:487px;top:510px;font-family:'Liberation Sans';font-size:20px;font-weight:normal;color:#6d6d6d;transform-origin:left center;">21</div>
<div style="position:absolute;left:258px;top:544px;width:591px;height:30px;box-sizing:border-box;background:#fdfdfd;border-top:2px solid #6f6f6f;border-left:2px solid #6f6f6f;border-right:1px solid #e3e3e3;border-bottom:1px solid #e3e3e3"></div>
<div style="position:absolute;left:831px;top:546px;width:17px;height:27px;box-sizing:border-box;background:#f4f3f5;border-top:1px solid #e2e2e2;border-left:1px solid #e2e2e2;border-right:2px solid #767676;border-bottom:2px solid #767676"></div>
<svg style="position:absolute;left:834.5px;top:556.5px" width="10" height="6" viewBox="0 0 10 6"><path d="M0.5 0.5H9.5L5 5Z" fill="#000"/></svg>
<div style="position:absolute;left:258px;top:586px;width:592px;height:34px;box-sizing:border-box;background:#fdfdfd;border:1px solid #6a6a6a"></div>
<div style="position:absolute;left:258px;top:628px;width:171px;height:34px;box-sizing:border-box;background:#e5e4e7;border:1px solid #6a6a6a"></div>
<div style="position:absolute;left:436px;top:628px;width:372px;height:34px;box-sizing:border-box;background:#e5e4e7;border:1px solid #6a6a6a"></div>
<div style="position:absolute;left:806px;top:628px;width:44px;height:34px;box-sizing:border-box;background:#fbfbfb;border-top:1px solid #d9d9d9;border-left:1px solid #d9d9d9;border-right:2px solid #707070;border-bottom:2px solid #707070"></div>
<div class="t" style="transform:translateX(-1.18px) scaleX(1.1818);left:821px;top:633px;font-family:'Liberation Sans';font-size:22px;font-weight:normal;color:#000;transform-origin:left center;">+</div>
<div style="position:absolute;left:258px;top:665px;width:414px;height:34px;box-sizing:border-box;background:#e5e4e7;border:1px solid #6a6a6a"></div>
<div style="position:absolute;left:679px;top:665px;width:171px;height:34px;box-sizing:border-box;background:#e5e4e7;border:1px solid #6a6a6a"></div>
<div style="position:absolute;left:258px;top:709px;width:178px;height:34px;box-sizing:border-box;background:#fdfdfd;border:1px solid #6a6a6a"></div>
<div class="t" style="transform:translateX(0.00px) scaleX(0.9038);left:263px;top:743px;font-family:'Liberation Sans';font-size:20px;font-weight:normal;color:#000;transform-origin:left center;">TBAI-B00000000-030223-GTJehQU/aD7qz-010</div>
<div style="position:absolute;left:15px;top:778px;width:12px;height:12px;box-sizing:border-box;background:#fdfdfd;border-top:2px solid #6a6a6a;border-left:2px solid #6a6a6a;border-right:1px solid #e0e0e0;border-bottom:1px solid #e0e0e0"></div>
<svg style="position:absolute;left:15px;top:778px" width="12" height="12" viewBox="0 0 12 12"><path d="M3.3 5.8L5.5 8.6L9.4 3.6" fill="none" stroke="#000" stroke-width="2.1"/></svg>
<div class="t" style="transform:translateX(-1.85px) scaleX(0.9242);left:35px;top:773px;font-family:'Liberation Sans';font-size:20px;font-weight:normal;color:#000;transform-origin:left center;">Presupuestado</div>
<div style="position:absolute;left:15px;top:807px;width:12px;height:12px;box-sizing:border-box;background:#fdfdfd;border-top:2px solid #6a6a6a;border-left:2px solid #6a6a6a;border-right:1px solid #e0e0e0;border-bottom:1px solid #e0e0e0"></div>
<svg style="position:absolute;left:15px;top:807px" width="12" height="12" viewBox="0 0 12 12"><path d="M3.3 5.8L5.5 8.6L9.4 3.6" fill="none" stroke="#000" stroke-width="2.1"/></svg>
<div class="t" style="transform:translateX(0.00px) scaleX(0.9167);left:35px;top:802px;font-family:'Liberation Sans';font-size:20px;font-weight:normal;color:#000;transform-origin:left center;">Aceptado</div>
<div style="position:absolute;left:15px;top:836px;width:12px;height:12px;box-sizing:border-box;background:#fdfdfd;border-top:2px solid #6a6a6a;border-left:2px solid #6a6a6a;border-right:1px solid #e0e0e0;border-bottom:1px solid #e0e0e0"></div>
<svg style="position:absolute;left:15px;top:836px" width="12" height="12" viewBox="0 0 12 12"><path d="M3.3 5.8L5.5 8.6L9.4 3.6" fill="none" stroke="#000" stroke-width="2.1"/></svg>
<div class="t" style="transform:translateX(-1.91px) scaleX(0.9556);left:35px;top:831px;font-family:'Liberation Sans';font-size:20px;font-weight:normal;color:#000;transform-origin:left center;">Entregado</div>
<div style="position:absolute;left:15px;top:863px;width:12px;height:12px;box-sizing:border-box;background:#fdfdfd;border-top:2px solid #b8b8b8;border-left:2px solid #b8b8b8;border-right:1px solid #e0e0e0;border-bottom:1px solid #e0e0e0"></div>
<svg style="position:absolute;left:15px;top:863px" width="12" height="12" viewBox="0 0 12 12"><path d="M3.3 5.8L5.5 8.6L9.4 3.6" fill="none" stroke="#9a9a9a" stroke-width="2.1"/></svg>
<div class="t" style="transform:translateX(-1.88px) scaleX(0.9412);left:35px;top:858px;font-family:'Liberation Sans';font-size:20px;font-weight:normal;color:#a0a0a0;transform-origin:left center;">Factura emitida</div>
<div style="position:absolute;left:15px;top:892px;width:12px;height:12px;box-sizing:border-box;background:#fdfdfd;border-top:2px solid #6a6a6a;border-left:2px solid #6a6a6a;border-right:1px solid #e0e0e0;border-bottom:1px solid #e0e0e0"></div>
<div class="t" style="transform:translateX(-0.92px) scaleX(0.9200);left:35px;top:887px;font-family:'Liberation Sans';font-size:20px;font-weight:normal;color:#000;transform-origin:left center;">Cobrado</div>
<div style="position:absolute;left:15px;top:920px;width:12px;height:12px;box-sizing:border-box;background:#fdfdfd;border-top:2px solid #6a6a6a;border-left:2px solid #6a6a6a;border-right:1px solid #e0e0e0;border-bottom:1px solid #e0e0e0"></div>
<svg style="position:absolute;left:15px;top:920px" width="12" height="12" viewBox="0 0 12 12"><path d="M3.3 5.8L5.5 8.6L9.4 3.6" fill="none" stroke="#000" stroke-width="2.1"/></svg>
<div class="t" style="transform:translateX(-1.89px) scaleX(0.9474);left:35px;top:915px;font-family:'Liberation Sans';font-size:20px;font-weight:normal;color:#000;transform-origin:left center;">En curso</div>
<div style="position:absolute;left:183px;top:807px;width:12px;height:12px;box-sizing:border-box;background:#fdfdfd;border-top:2px solid #6a6a6a;border-left:2px solid #6a6a6a;border-right:1px solid #e0e0e0;border-bottom:1px solid #e0e0e0"></div>
<div class="t" style="transform:translateX(-1.84px) scaleX(0.9184);left:203px;top:802px;font-family:'Liberation Sans';font-size:20px;font-weight:normal;color:#000;transform-origin:left center;">Rechazado</div>
<div class="t" style="transform:translateX(2.09px) scaleX(1.0435);right:1345px;top:769px;font-family:'Liberation Sans';font-size:20px;font-weight:normal;color:#000;transform-origin:right center;">Importe:</div>
<div class="t" style="transform:translateX(1.89px) scaleX(0.9449);right:1345px;top:800px;font-family:'Liberation Sans';font-size:20px;font-weight:normal;color:#000;transform-origin:right center;">Descuento:</div>
<div class="t" style="transform:translateX(1.96px) scaleX(0.9815);right:1345px;top:837px;font-family:'Liberation Sans';font-size:20px;font-weight:normal;color:#000;transform-origin:right center;">B.Imponible:</div>
<div class="t" style="transform:translateX(1.98px) scaleX(0.9904);right:1345px;top:912px;font-family:'Liberation Sans';font-size:20px;font-weight:normal;color:#000;transform-origin:right center;">Iva+Rec.Equiv.:</div>
<div class="t" style="transform:translateX(1.07px) scaleX(1.0667);right:1025px;top:763px;font-family:'Liberation Sans';font-size:22px;font-weight:bold;color:#3b3b3b;transform-origin:right center;">45,00</div>
<div class="t" style="transform:translateX(1.08px) scaleX(1.0805);right:1025px;top:799px;font-family:'Liberation Sans';font-size:22px;font-weight:bold;color:#3b3b3b;transform-origin:right center;">0,00</div>
<div class="t" style="transform:translateX(1.07px) scaleX(1.0667);right:1025px;top:831px;font-family:'Liberation Sans';font-size:22px;font-weight:bold;color:#3b3b3b;transform-origin:right center;">45,00</div>
<div class="t" style="transform:translateX(0.00px) scaleX(1.0548);right:1027px;top:911px;font-family:'Liberation Sans';font-size:22px;font-weight:bold;color:#3b3b3b;transform-origin:right center;">9,45</div>
<div class="t" style="transform:translateX(-1.88px) scaleX(0.9383);left:895px;top:191px;font-family:'Liberation Sans';font-size:20px;font-weight:normal;color:#000;transform-origin:left center;">Proyecto:</div>
<div style="position:absolute;left:988px;top:190px;width:38px;height:33px;box-sizing:border-box;background:#fbfbfb;border-top:1px solid #d9d9d9;border-left:1px solid #d9d9d9;border-right:2px solid #707070;border-bottom:2px solid #707070"></div>
<svg style="position:absolute;left:988px;top:191px" width="38" height="32" viewBox="0 0 38 32"><path d="M8.1 10V4.1H13.3L16.3 9" fill="none" stroke="#0b3b5c" stroke-width="1.7"/><rect x="6.2" y="9.8" width="16.7" height="5.8" fill="#0b3b5c"/><rect x="3" y="17" width="23.1" height="6" rx="3" fill="#0b3b5c"/><path d="M6 19.2V21.2M9.8 19.2V21.2M13.6 19.2V21.2M17.4 19.2V21.2M21.2 19.2V21.2" stroke="#fff" stroke-width="1.1"/><path d="M19.8 10.2L24.2 5.2H29" fill="none" stroke="#0b3b5c" stroke-width="1.5"/><circle cx="30.6" cy="6.4" r="0.8" fill="#0b3b5c"/><path d="M30.5 11Q34 12.5 34 15.5Q33.5 19 29.5 19.2Q27 19 27.5 16.5Q28.5 13 30.5 11Z" fill="#0b3b5c"/></svg>
<div style="position:absolute;left:1035px;top:190px;width:768px;height:29px;box-sizing:border-box;background:#fdfdfd;border-top:2px solid #6f6f6f;border-left:2px solid #6f6f6f;border-right:1px solid #e3e3e3;border-bottom:1px solid #e3e3e3"></div>
<div style="position:absolute;left:1786px;top:192px;width:16px;height:26px;box-sizing:border-box;background:#f4f3f5;border-top:1px solid #e2e2e2;border-left:1px solid #e2e2e2;border-right:2px solid #767676;border-bottom:2px solid #767676"></div>
<svg style="position:absolute;left:1789.0px;top:202.0px" width="10" height="6" viewBox="0 0 10 6"><path d="M0.5 0.5H9.5L5 5Z" fill="#a8a8a8"/></svg>
<div style="position:absolute;left:866px;top:243px;width:993px;height:577px;box-sizing:border-box;border:1px solid #a8a8a8"></div>
<div style="position:absolute;left:872px;top:236px;width:536px;height:16px;box-sizing:border-box;background:#fdfdfd"></div>
<div style="position:absolute;left:1651px;top:236px;width:216px;height:20px;box-sizing:border-box;background:#fdfdfd"></div>
<div class="t" style="transform:translateX(-1.05px) scaleX(1.0537);left:875px;top:234px;font-family:'Liberation Sans';font-size:18px;font-weight:normal;color:#000;transform-origin:left center;">Cobros y vencimientos de esta venta  ... (Haz click para añadir)</div>
<div class="t" style="transform:translateX(-1.05px) scaleX(1.0526);left:1654px;top:235px;font-family:'Liberation Sans';font-size:18px;font-weight:normal;color:#000;transform-origin:left center;">Manual</div>
<div style="position:absolute;left:1847px;top:237px;width:12px;height:12px;box-sizing:border-box;background:#fdfdfd;border-top:2px solid #6a6a6a;border-left:2px solid #6a6a6a;border-right:1px solid #e0e0e0;border-bottom:1px solid #e0e0e0"></div>
<div style="position:absolute;left:885px;top:260px;width:975px;height:502px;box-sizing:border-box;background:#fdfdfd;border-top:2px solid #6b6b6b;border-left:2px solid #6b6b6b;border-right:1px solid #e2e2e2;border-bottom:1px solid #e2e2e2"></div>
<div style="position:absolute;left:887px;top:262px;width:972px;height:72px;box-sizing:border-box;background:#fdc3c6"></div>
<div class="t" style="left:887px;top:264px;font-family:'Liberation Mono';font-size:15px;font-weight:normal;color:#222;transform-origin:left center;letter-spacing:1px;">13/02/2023  Cobro cliente               54,45  (Cobro)</div>
<div class="t" style="left:887px;top:282px;font-family:'Liberation Mono';font-size:15px;font-weight:normal;color:#222;transform-origin:left center;letter-spacing:1px;">Datos de cobro:Fra.2023/21 03/02/2023</div>
<div class="t" style="left:887px;top:300px;font-family:'Liberation Mono';font-size:15px;font-weight:normal;color:#222;transform-origin:left center;letter-spacing:1px;">Banco : KUTXABANK</div>
<div class="t" style="left:887px;top:318px;font-family:'Liberation Mono';font-size:15px;font-weight:normal;color:#222;transform-origin:left center;letter-spacing:1px;">------------------------------------------------------</div>
<div class="t" style="transform:translateX(-1.04px) scaleX(1.0417);left:908px;top:781px;font-family:'Liberation Sans';font-size:18px;font-weight:normal;color:#000;transform-origin:left center;">Cobrado:</div>
<div class="t" style="transform:translateX(1.10px) scaleX(1.0976);right:699px;top:779px;font-family:'Liberation Sans';font-size:22px;font-weight:bold;color:#333;transform-origin:right center;">0,00</div>
<div class="t" style="transform:translateX(-1.05px) scaleX(1.0541);left:1227px;top:781px;font-family:'Liberation Sans';font-size:18px;font-weight:normal;color:#000;transform-origin:left center;">En curso:</div>
<div class="t" style="transform:translateX(0.00px) scaleX(1.0630);right:400px;top:779px;font-family:'Liberation Sans';font-size:22px;font-weight:bold;color:#333;transform-origin:right center;">54,45</div>
<div class="t" style="transform:translateX(-1.05px) scaleX(1.0476);left:1484px;top:781px;font-family:'Liberation Sans';font-size:18px;font-weight:normal;color:#000;transform-origin:left center;">Pendiente:</div>
<div class="t" style="transform:translateX(1.09px) scaleX(1.0854);right:45px;top:779px;font-family:'Liberation Sans';font-size:22px;font-weight:bold;color:#333;transform-origin:right center;">0,00</div>
<div class="t" style="transform:translateX(0.00px) scaleX(1.0053);left:927px;top:857px;font-family:'Liberation Sans';font-size:21px;font-weight:normal;color:#000;transform-origin:left center;">Total con Retención:</div>
<div class="t" style="transform:translateX(0.00px) scaleX(1.0648);right:550px;top:856px;font-family:'Liberation Sans';font-size:22px;font-weight:bold;color:#3a3a3a;transform-origin:right center;">54,45</div>
<div class="t" style="transform:translateX(0.00px) scaleX(1.0750);left:1464px;top:857px;font-family:'Liberation Sans';font-size:21px;font-weight:normal;color:#000;transform-origin:left center;">Total:</div>
<div class="t" style="transform:translateX(0.00px) scaleX(1.0685);right:152px;top:856px;font-family:'Liberation Sans';font-size:22px;font-weight:bold;color:#3a3a3a;transform-origin:right center;">54,45</div>
<div style="position:absolute;left:858px;top:898px;width:86px;height:37px;box-sizing:border-box;background:#f3f2f5;border-top:1px solid #d5d5d5;border-left:1px solid #d5d5d5;border-right:2px solid #707070;border-bottom:2px solid #707070"></div>
<div class="t" style="transform:translateX(-1.79px) scaleX(0.8943);left:876px;top:905px;font-family:'Liberation Sans';font-size:20px;font-weight:normal;color:#000;transform-origin:left center;">Previs</div>
<div style="position:absolute;left:1318px;top:933px;width:110px;height:2px;box-sizing:border-box;background:#2a2a3a"></div>
<div style="position:absolute;left:1428px;top:933px;width:439px;height:1px;box-sizing:border-box;background:#b8b8b8"></div>
<div style="position:absolute;left:1681px;top:926px;width:12px;height:12px;box-sizing:border-box;background:#fdfdfd;border-top:2px solid #6a6a6a;border-left:2px solid #6a6a6a;border-right:1px solid #e0e0e0;border-bottom:1px solid #e0e0e0"></div>
<div class="t" style="transform:translateX(-1.95px) scaleX(0.9756);left:1701px;top:921px;font-family:'Liberation Sans';font-size:20px;font-weight:normal;color:#000;transform-origin:left center;">No afecta</div>
</body></html>
